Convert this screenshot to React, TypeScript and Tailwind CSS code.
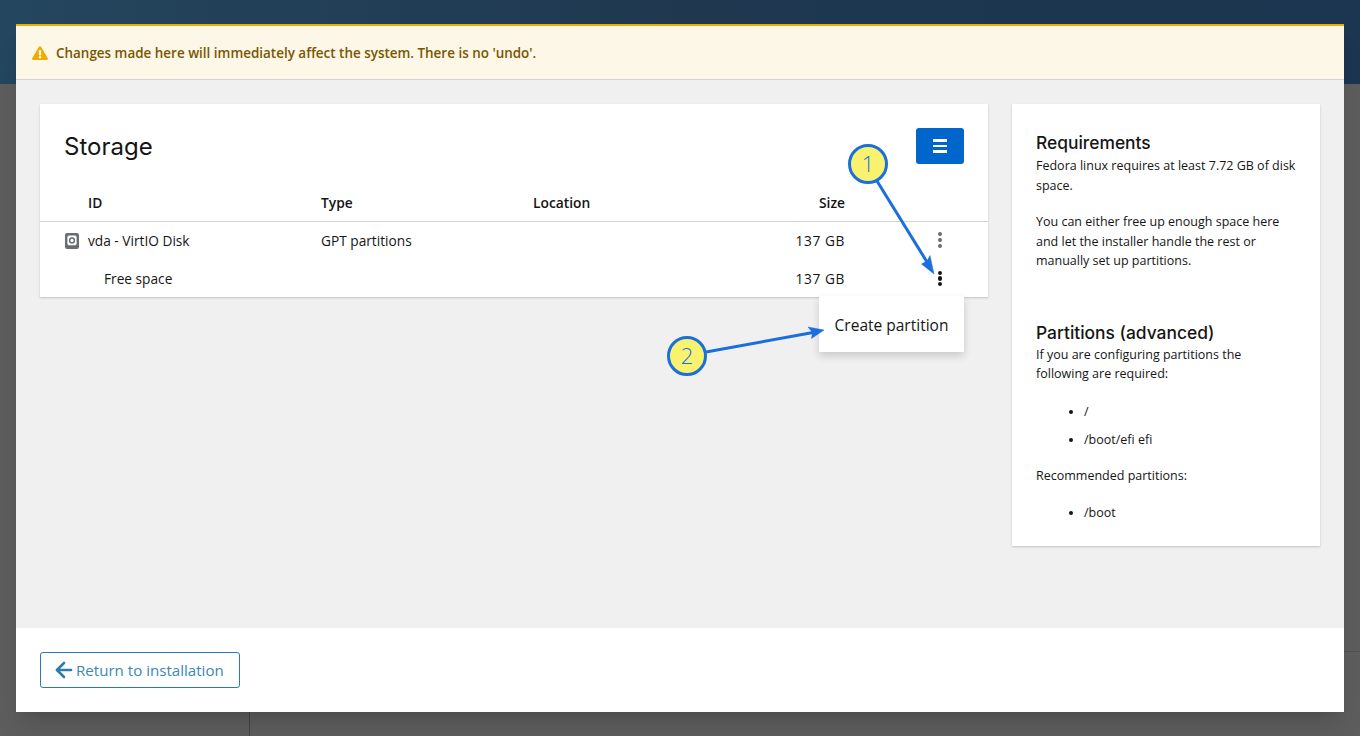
import { ArrowLeft } from "lucide-react";

const font = "font-['Open_Sans','Noto_Sans',sans-serif]";

function Kebab({ dark }: { dark?: boolean }) {
  return (
    <div className={`flex w-[16px] flex-col items-center gap-[1.6px] ${dark ? "text-[#151515]" : "text-[#6a6e73]"}`}>
      <span className="h-[4.2px] w-[4.2px] rounded-full bg-current" />
      <span className="h-[4.2px] w-[4.2px] rounded-full bg-current" />
      <span className="h-[4.2px] w-[4.2px] rounded-full bg-current" />
    </div>
  );
}

function WarningIcon() {
  return (
    <svg width="16" height="14" viewBox="0 0 16 14" className="shrink-0">
      <path d="M8 0.2 C8.5 0.2 8.9 0.4 9.2 0.9 L15.8 12.2 C16.3 13 15.7 14 14.8 14 L1.2 14 C0.3 14 -0.3 13 0.2 12.2 L6.8 0.9 C7.1 0.4 7.5 0.2 8 0.2 Z" fill="#f0ab00" />
      <rect x="6.9" y="4" width="2.2" height="5.4" rx="0.6" fill="#fdf7e7" />
      <circle cx="8" cy="11.3" r="1.25" fill="#fdf7e7" />
    </svg>
  );
}

function DiskIcon() {
  return (
    <svg width="14" height="16" viewBox="0 0 14 16">
      <rect width="14" height="16" rx="2.2" fill="#6a6e73" />
      <rect x="2.4" y="2.6" width="9.2" height="9.6" rx="1.6" fill="#ffffff" />
      <circle cx="7" cy="7.4" r="2.4" fill="none" stroke="#6a6e73" strokeWidth="1.5" />
    </svg>
  );
}

// callouts drawn over the page
function Annotations() {
  return (
    <svg className="absolute left-0 top-0 z-30 pointer-events-none" width="1360" height="736" viewBox="0 0 1360 736" fill="none">
      <path d="M877 181 L927 262" stroke="#1a6fdc" strokeWidth="3" />
      <path d="M934 274 L921.5 264 L927 261 L930 255.5 Z" fill="#1a6fdc" stroke="#1a6fdc" strokeWidth="0.5" />
      <path d="M706 352 L813 332.5" stroke="#1a6fdc" strokeWidth="3" />
      <path d="M824 330 L808 327 L812.5 332.5 L811.5 338.5 Z" fill="#1a6fdc" stroke="#1a6fdc" strokeWidth="0.5" />
      <circle cx="868" cy="164" r="18.5" fill="#f9f26f" stroke="#1a6fdc" strokeWidth="3" />
      <circle cx="687" cy="356" r="18.5" fill="#f9f26f" stroke="#1a6fdc" strokeWidth="3" />
      <text x="868" y="172" textAnchor="middle" fontSize="22" fontWeight="300" fill="#1a6fdc" fontFamily="Open Sans, sans-serif">1</text>
      <text x="687" y="364" textAnchor="middle" fontSize="22" fontWeight="300" fill="#1a6fdc" fontFamily="Open Sans, sans-serif">2</text>
    </svg>
  );
}

export default function App() {
  return (
    <div className={`relative h-[736px] w-[1360px] overflow-hidden bg-[#5d5d5d] ${font}`}>
      {/* page behind the modal */}
      <div className="h-[84px] bg-gradient-to-r from-[#24465e] via-[#1f3850] to-[#1c3550]" />
      <div className="absolute left-[249px] top-[84px] h-[652px] w-px bg-[#444444]" />
      <div className="absolute left-[249px] right-0 top-[651px] h-px bg-[#525252]" />

      {/* modal */}
      <div className="absolute bottom-[24px] left-[16px] right-[16px] top-[24px] z-10 flex flex-col bg-white shadow-xl">
        <div className="flex h-[56px] shrink-0 items-center gap-[8px] border-b border-t-2 border-b-[#d2d2d2] border-t-[#f0ab00] bg-[#fdf7e7] px-[16px]">
          <WarningIcon />
          <span className="pt-[1px] text-[13.45px] font-semibold text-[#795600]">
            Changes made here will immediately affect the system. There is no 'undo'.
          </span>
        </div>

        <div className="flex min-h-0 flex-1 items-start gap-[24px] bg-[#f0f0f0] p-[24px]">
          {/* storage card */}
          <div className="w-[948px] shrink-0 bg-white text-[13.7px] text-[#151515] shadow-[0_1px_2px_rgba(3,3,3,0.2)]">
            <div className="flex h-[82px] items-start justify-between px-[24px] pt-[24px]">
              <h2 className="pt-[1px] font-['Inter',sans-serif] text-[24px] font-normal leading-[36px] text-[#151515]">Storage</h2>
              <button className="flex h-[36px] w-[48px] flex-col items-center justify-center gap-[3px] rounded-[3px] bg-[#06c]">
                <span className="h-[2.5px] w-[14px] bg-white" />
                <span className="h-[2.5px] w-[14px] bg-white" />
                <span className="h-[2.5px] w-[14px] bg-white" />
              </button>
            </div>
            <div className="grid h-[36px] grid-cols-[48px_233px_212px_217px_95px] items-center border-b border-[#d2d2d2] text-[13.8px] font-semibold">
              <span />
              <span>ID</span>
              <span>Type</span>
              <span>Location</span>
              <span className="text-right">Size</span>
            </div>
            <div className="grid h-[38px] grid-cols-[48px_233px_212px_217px_95px_1fr] items-center">
              <span className="flex justify-end pr-[9px]">
                <DiskIcon />
              </span>
              <span>vda - VirtIO Disk</span>
              <span>GPT partitions</span>
              <span />
              <span className="text-right tracking-[0.6px]">137 GB</span>
              <span className="flex justify-end pb-[2px] pr-[40px]">
                <Kebab />
              </span>
            </div>
            <div className="grid h-[37px] grid-cols-[64px_217px_212px_217px_95px_1fr] items-center">
              <span />
              <span className="pt-[1px]">Free space</span>
              <span />
              <span />
              <span className="pt-[1px] text-right tracking-[0.6px]">137 GB</span>
              <span className="flex justify-end pr-[40px]">
                <Kebab dark />
              </span>
            </div>
          </div>

          {/* help card */}
          <div className="h-[442px] w-[308px] shrink-0 bg-white p-[24px] text-[12.5px] leading-[19.5px] text-[#151515] shadow-[0_1px_2px_rgba(3,3,3,0.2)]">
            <h3 className="pt-[1px] font-['Inter',sans-serif] text-[17.4px] font-medium leading-[27px]">Requirements</h3>
            <p>Fedora linux requires at least 7.72 GB of disk space.</p>
            <p className="mt-[17px]">
              You can either free up enough space here and let the installer handle the rest or manually set up partitions.
            </p>
            <h3 className="mt-[48px] font-['Inter',sans-serif] text-[17.4px] font-medium leading-[27px]">Partitions (advanced)</h3>
            <p className="-mt-[1px]">If you are configuring partitions the following are required:</p>
            <ul className="mt-[18px] list-disc pl-[48px]">
              <li>/</li>
              <li className="mt-[9px]">/boot/efi efi</li>
            </ul>
            <p className="mt-[16px]">Recommended partitions:</p>
            <ul className="mt-[18px] list-disc pl-[48px]">
              <li>/boot</li>
            </ul>
          </div>
        </div>

        <div className="flex h-[84px] shrink-0 items-center bg-white px-[24px]">
          <button className="flex h-[36px] w-[200px] items-center rounded-[3px] border border-[#2b7bad] pl-[11px] text-[15.1px] text-[#3b87b5]">
            <ArrowLeft size={24} strokeWidth={2.6} className="text-[#2b7bad]" />
            Return to installation
          </button>
        </div>
      </div>

      {/* dropdown */}
      <div className="absolute left-[819px] top-[296px] z-20 flex h-[56px] w-[145px] items-center justify-center bg-white pt-[3px] text-[15.5px] text-[#151515] shadow-[0_4px_8px_rgba(3,3,3,0.16)]">
        Create partition
      </div>

      <Annotations />
    </div>
  );
}
